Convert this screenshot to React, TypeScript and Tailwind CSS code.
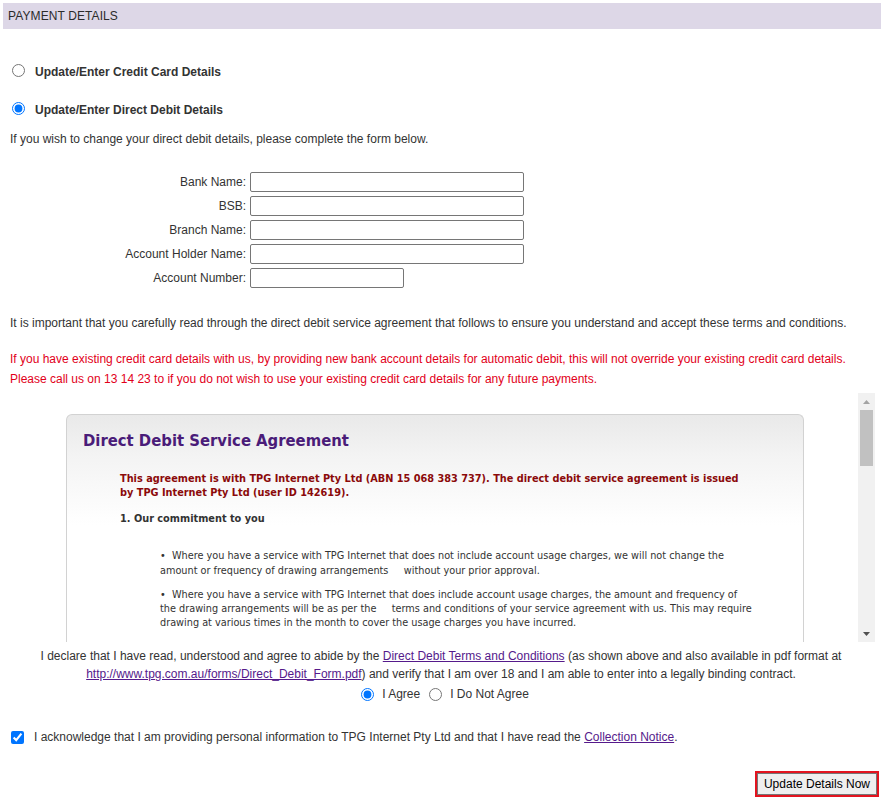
import React from "react";

const labelCls = "text-right text-[12px] leading-[20px] text-[#333]";
const inputCls = "h-[20px] border border-[#767676] rounded-[2px] bg-white";

export default function App() {
  return (
    <div className="w-[882px] bg-white text-[12px] text-[#333] font-['Liberation_Sans',Arial,sans-serif] pb-[1px]">
      <div className="ml-[3px] mr-[1px] mt-[3px] h-[26px] bg-[#ddd7e7] px-[5px] flex items-center text-[12px] text-[#2b2b2b] tracking-[0.1px]">
        PAYMENT DETAILS
      </div>

      <div className="mt-[31px] h-[20px] flex items-center">
        <input type="radio" name="pt" className="ml-[12px] w-[13px] h-[13px] m-0" />
        <span className="ml-[10px] mt-[3px] font-bold text-[12px]">Update/Enter Credit Card Details</span>
      </div>
      <div className="mt-[18px] h-[20px] flex items-center">
        <input type="radio" name="pt" defaultChecked className="ml-[12px] w-[13px] h-[13px] m-0" />
        <span className="ml-[10px] mt-[3px] font-bold text-[12px]">Update/Enter Direct Debit Details</span>
      </div>
      <div className="mt-[12px] h-[18px] leading-[18px] pl-[10px]">
        If you wish to change your direct debit details, please complete the form below.
      </div>

      <div className="mt-[24px] grid grid-cols-[246px_auto] gap-x-[4px] gap-y-[4px] items-center">
        <div className={labelCls}>Bank Name:</div>
        <div className={`${inputCls} w-[274px]`} />
        <div className={labelCls}>BSB:</div>
        <div className={`${inputCls} w-[274px]`} />
        <div className={labelCls}>Branch Name:</div>
        <div className={`${inputCls} w-[274px]`} />
        <div className={labelCls}>Account Holder Name:</div>
        <div className={`${inputCls} w-[274px]`} />
        <div className={labelCls}>Account Number:</div>
        <div className={`${inputCls} w-[154px]`} />
      </div>

      <div className="mt-[26px] h-[18px] leading-[18px] pl-[10px]">
        It is important that you carefully read through the direct debit service agreement that follows to ensure you understand and accept these terms and conditions.
      </div>
      <div className="mt-[17px] pl-[10px] leading-[20px] text-[#e2001a]">
        <div>If you have existing credit card details with us, by providing new bank account details for automatic debit, this will not override your existing credit card details.</div>
        <div>Please call us on 13 14 23 to if you do not wish to use your existing credit card details for any future payments.</div>
      </div>

      <div className="mt-[4px] h-[249px] flex">
        <div className="w-[858px] h-[249px] overflow-hidden font-['DejaVu_Sans_Condensed','DejaVu_Sans',sans-serif]">
          <div className="ml-[66px] mt-[21px] w-[738px] h-[300px] border border-b-0 border-[#d2d2d2] rounded-t-[6px] bg-[linear-gradient(180deg,#e9e9e9_0px,#f3f3f3_40px,#fafafa_80px,#ffffff_110px)] pt-[16px]">
            <div className="pl-[16px] text-[16.5px] leading-[20px] font-bold text-[#4a1c79]">
              Direct Debit Service Agreement
            </div>
            <div className="mt-[21px] ml-[53px] text-[10.85px] leading-[14px] font-bold text-[#8b0a0a] whitespace-nowrap">
              This agreement is with TPG Internet Pty Ltd (ABN 15 068 383 737). The direct debit service agreement is issued
              <br />
              by TPG Internet Pty Ltd (user ID 142619).
            </div>
            <div className="mt-[12px] ml-[53px] text-[10.85px] leading-[14px] font-bold text-[#333]">
              1. Our commitment to you
            </div>
            <div className="mt-[22px] ml-[93px] text-[10.8px] leading-[15px] text-[#333] whitespace-nowrap">
              {"\u2022\u00a0\u00a0Where you have a service with TPG Internet that does not include account usage charges, we will not change the"}
              <br />
              {"amount or frequency of drawing arrangements\u00a0\u00a0\u00a0\u00a0 without your prior approval."}
            </div>
            <div className="mt-[10px] ml-[93px] text-[10.8px] leading-[14px] text-[#333] whitespace-nowrap">
              {"\u2022\u00a0\u00a0Where you have a service with TPG Internet that does include account usage charges, the amount and frequency of"}
              <br />
              {"the drawing arrangements will be as per the\u00a0\u00a0\u00a0\u00a0 terms and conditions of your service agreement with us. This may require"}
              <br />
              drawing at various times in the month to cover the usage charges you have incurred.
            </div>
            <div className="mt-[11px] ml-[93px] text-[10.8px] leading-[14px] text-[#333] whitespace-nowrap">
              {"\u2022\u00a0\u00a0We will give you at least 14 days written notice before we change the terms of the drawing arrangements."}
            </div>
          </div>
        </div>
        <div className="w-[17px] h-[249px] bg-[#f1f1f1] flex flex-col items-center">
          <div className="h-[17px] flex items-center justify-center">
            <svg width="7" height="4" viewBox="0 0 7 4"><polygon points="0,4 7,4 3.5,0" fill="#a3a3a3" /></svg>
          </div>
          <div className="w-[13px] h-[56px] bg-[#c1c1c1]" />
          <div className="flex-1" />
          <div className="h-[17px] flex items-center justify-center">
            <svg width="7" height="4" viewBox="0 0 7 4"><polygon points="0,0 7,0 3.5,4" fill="#505050" /></svg>
          </div>
        </div>
      </div>

      <div className="mt-[5px] text-center leading-[18px] text-[12px]">
        <div>
          I declare that I have read, understood and agree to abide by the{" "}
          <span className="underline text-[#551a8b]">Direct Debit Terms and Conditions</span> (as shown above and also available in pdf format at
        </div>
        <div>
          <span className="underline text-[#551a8b]">http://www.tpg.com.au/forms/Direct_Debit_Form.pdf</span>) and verify that I am over 18 and I am able to enter into a legally binding contract.
        </div>
      </div>
      <div className="mt-[1px] h-[20px] flex items-center justify-center pl-[8px]">
        <input type="radio" name="agree" defaultChecked className="w-[13px] h-[13px] m-0" />
        <span className="ml-[8px]">I Agree</span>
        <input type="radio" name="agree" className="ml-[9px] w-[13px] h-[13px] m-0" />
        <span className="ml-[8px]">I Do Not Agree</span>
      </div>

      <div className="mt-[23px] h-[20px] flex items-center">
        <input type="checkbox" defaultChecked className="ml-[11px] w-[13px] h-[13px] m-0" />
        <span className="ml-[10px]">
          I acknowledge that I am providing personal information to TPG Internet Pty Ltd and that I have read the{" "}
          <span className="underline text-[#551a8b]">Collection Notice</span>.
        </span>
      </div>

      <div className="mt-[24px] flex justify-end pr-[3px]">
        <div className="border-2 border-[#e3141f]">
          <button className="h-[22px] px-[6px] bg-[#efefef] border border-[#767676] text-[12px] text-black leading-[20px] font-['Liberation_Sans',Arial,sans-serif]">
            Update Details Now
          </button>
        </div>
      </div>
    </div>
  );
}
